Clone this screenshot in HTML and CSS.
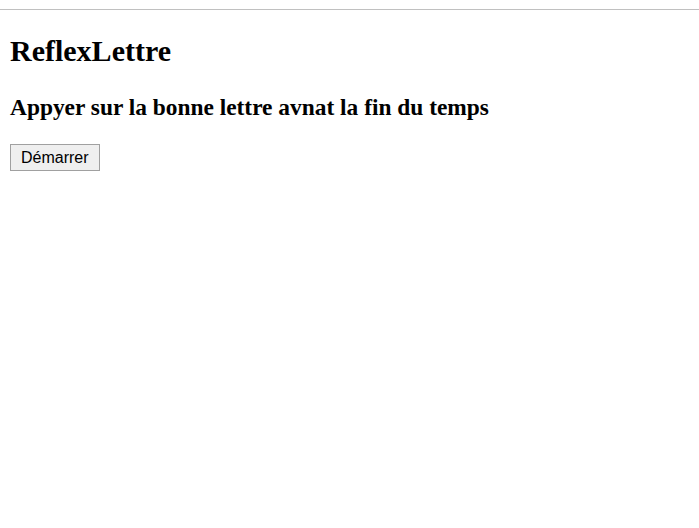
FILE: index.html
```html
<!DOCTYPE html>
<html lang="fr">
<head>
<meta charset="utf-8">
<title>ReflexLettre</title>
<link rel="stylesheet" href="styles.css">
</head>
<body>
<div class="topbar"></div>
<main class="page">
  <h1 class="title">ReflexLettre</h1>
  <h3 class="subtitle">Appyer sur la bonne lettre avnat la fin du temps</h3>
  <button class="start" type="button">Démarrer</button>
</main>
</body>
</html>
```
FILE: styles.css
```css
html, body {
  margin: 0;
  padding: 0;
  background: #fff;
}
body {
  font-family: "Liberation Serif", "Times New Roman", serif;
  color: #000;
}
.topbar {
  height: 9px;
  border-bottom: 1px solid #c0c0c0;
}
.page {
  padding: 0 10px;
  display: flow-root;
}
.title {
  font-size: 30px;
  line-height: 36px;
  font-weight: bold;
  margin: 23px 0 25px;
}
.subtitle {
  font-size: 23.4px;
  line-height: 27px;
  font-weight: bold;
  margin: 0 0 23px;
}
.start {
  font-family: "Liberation Sans", Arial, sans-serif;
  font-size: 16px;
  line-height: 19px;
  color: #000;
  background: #efefef;
  border: 1px solid #a0a0a0;
  border-radius: 0;
  padding: 3px 10px;
  margin: 0;
}
```
